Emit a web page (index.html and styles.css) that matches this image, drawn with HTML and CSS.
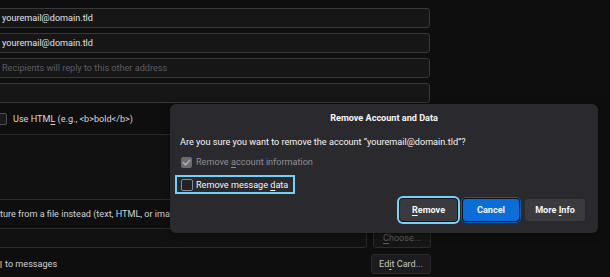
FILE: index.html
```html
<!DOCTYPE html>
<html>
<head>
<meta charset="utf-8">
<link rel="stylesheet" href="styles.css">
</head>
<body>
<div class="form">
  <div class="field">youremail@domain.tld</div>
  <div class="field">youremail@domain.tld</div>
  <div class="field placeholder">Recipients will reply to this other address</div>
  <div class="field"></div>
  <div class="check-row">
    <span class="box"></span>
    <span class="check-label">Use HTM<u>L</u> (e.g., &lt;b&gt;bold&lt;/b&gt;)</span>
  </div>
  <div class="textarea"></div>
  <div class="label-row">ture from a file instead (text, HTML, or image):</div>
  <div class="file-row">
    <div class="field file"></div>
    <div class="btn-page dim"><span><u>C</u>hoose...</span></div>
  </div>
  <div class="vcard-row">
    <span class="vcard-label">to messages</span>
    <div class="btn-page edit"><span>Ed<u>i</u>t Card...</span></div>
  </div>
</div>

<div class="dialog">
  <div class="title">Remove Account and Data</div>
  <div class="message">Are you sure you want to remove the account “youremail@domain.tld”?</div>
  <div class="opt disabled">
    <span class="cbox checked">
      <svg viewBox="0 0 12 12" width="11" height="11"><path d="M2.6 6.2 L5 8.6 L9.6 3.6" fill="none" stroke="#a9a9b0" stroke-width="1.8" stroke-linecap="round" stroke-linejoin="round"/></svg>
    </span>
    <span>Remove <u>a</u>ccount information</span>
  </div>
  <div class="opt focused">
    <span class="cbox"></span>
    <span>Remove message <u>d</u>ata</span>
  </div>
  <div class="buttons">
    <div class="btn remove"><span><u>R</u>emove</span></div>
    <div class="btn primary"><span>Cancel</span></div>
    <div class="btn"><span>More <u>I</u>nfo</span></div>
  </div>
</div>
</body>
</html>
```
FILE: styles.css
```css
* { box-sizing: border-box; }
body {
  margin: 0;
  background: #0e0e0f;
  font-family: Roboto, "Noto Sans", sans-serif;
  font-size: 9.1px;
  color: #d6d6d8;
  overflow: hidden;
  height: 277px;
}
u { text-decoration-thickness: 1px; text-underline-offset: 1.5px; }

.form {
  width: 439px;
  margin-left: -8px;
  padding-top: 8px;
  display: flex;
  flex-direction: column;
}
.field {
  height: 20px;
  border: 1px solid #38383b;
  border-radius: 3px;
  background: #161617;
  padding-left: 9px;
  display: flex;
  align-items: center;
  color: #e2e2e4;
  margin-bottom: 5px;
  width: 438px;
}
.field.placeholder { color: #5d5d62; }
.form > .field:nth-child(4) { margin-bottom: 0; }

.check-row {
  height: 31px;
  display: flex;
  align-items: center;
  padding-left: 3px;
}
.box {
  width: 12px;
  height: 12px;
  border: 1px solid #505055;
  border-radius: 2px;
  background: #1a1a1c;
}
.check-label { margin-left: 6px; color: #d6d6d8; }

.textarea {
  height: 66px;
  width: 438px;
  border: 1px solid #2a2a2c;
  border-radius: 2px;
  background: #111112;
}
.label-row {
  height: 28px;
  display: flex;
  align-items: center;
  padding-left: 8px;
  color: #d2d2d4;
}
.file-row {
  display: flex;
  gap: 6px;
  height: 20px;
}
.field.file {
  width: auto;
  flex: 1;
  margin: 0;
  background: #111112;
  border-color: #2a2a2c;
}
.btn-page {
  height: 20px;
  border: 1px solid #2a2a2d;
  border-radius: 3px;
  display: flex;
  align-items: center;
  justify-content: center;
}
.btn-page.dim {
  width: 58px;
  background: #161617;
  color: #5e5e62;
}
.vcard-row {
  margin-top: 6px;
  height: 20px;
  display: flex;
  align-items: center;
  justify-content: space-between;
}
.vcard-label {
  display: flex;
  align-items: center;
  color: #d2d2d4;
}
.vcard-label::before {
  content: "";
  width: 2px;
  height: 7px;
  margin-left: 8px;
  margin-right: 3px;
  background: #8a6239;
}
.btn-page.edit {
  width: 60px;
  background: #1c1c1e;
  color: #c6c6c8;
}

.dialog {
  position: absolute;
  left: 170px;
  top: 104px;
  width: 428px;
  height: 129px;
  background: #2a2a2e;
  border-radius: 6px;
  box-shadow: 0 2px 8px rgba(0,0,0,0.4);
  padding: 8px 13px 12px 10px;
  display: flex;
  flex-direction: column;
  color: #f6f6f8;
}
.title {
  height: 12px;
  line-height: 12px;
  text-align: center;
  font-weight: 700;
  padding-left: 3px;
}
.message {
  margin-top: 12px;
  height: 12px;
  line-height: 12px;
}
.opt {
  display: flex;
  align-items: center;
}
.opt.disabled {
  margin-top: 7px;
  height: 14px;
  padding-left: 1px;
  color: #8d8d93;
}
.opt.focused {
  margin-top: 6px;
  margin-left: -5px;
  align-self: flex-start;
  height: 19px;
  border: 2px solid #74d0f4;
  padding: 0 5px 0 4px;
  color: #f4f4f6;
}
.cbox {
  width: 12px;
  height: 12px;
  border-radius: 2px;
  margin-right: 3px;
  display: flex;
}
.opt.disabled .cbox {
  width: 11px;
  height: 11px;
  background: #6a6a70;
  margin-right: 4px;
}
.opt.focused .cbox {
  background: #222127;
  border: 1px solid #8a8a92;
}
.buttons {
  margin-top: 5px;
  display: flex;
  justify-content: flex-end;
  gap: 6px;
}
.btn {
  height: 22px;
  width: 60px;
  border-radius: 3px;
  background: #3a3a3f;
  color: #f6f6f8;
  font-weight: 700;
  display: flex;
  align-items: center;
  justify-content: center;
}
.btn.remove {
  width: 57px;
  box-shadow: 0 0 0 1px #18181b, 0 0 0 3px #78d2f5;
}
.btn.primary {
  width: 56px;
  background: #0b6dd8;
  box-shadow: 0 0 0 1px #131318, 0 0 0 2px #0a5cb2;
}
```
